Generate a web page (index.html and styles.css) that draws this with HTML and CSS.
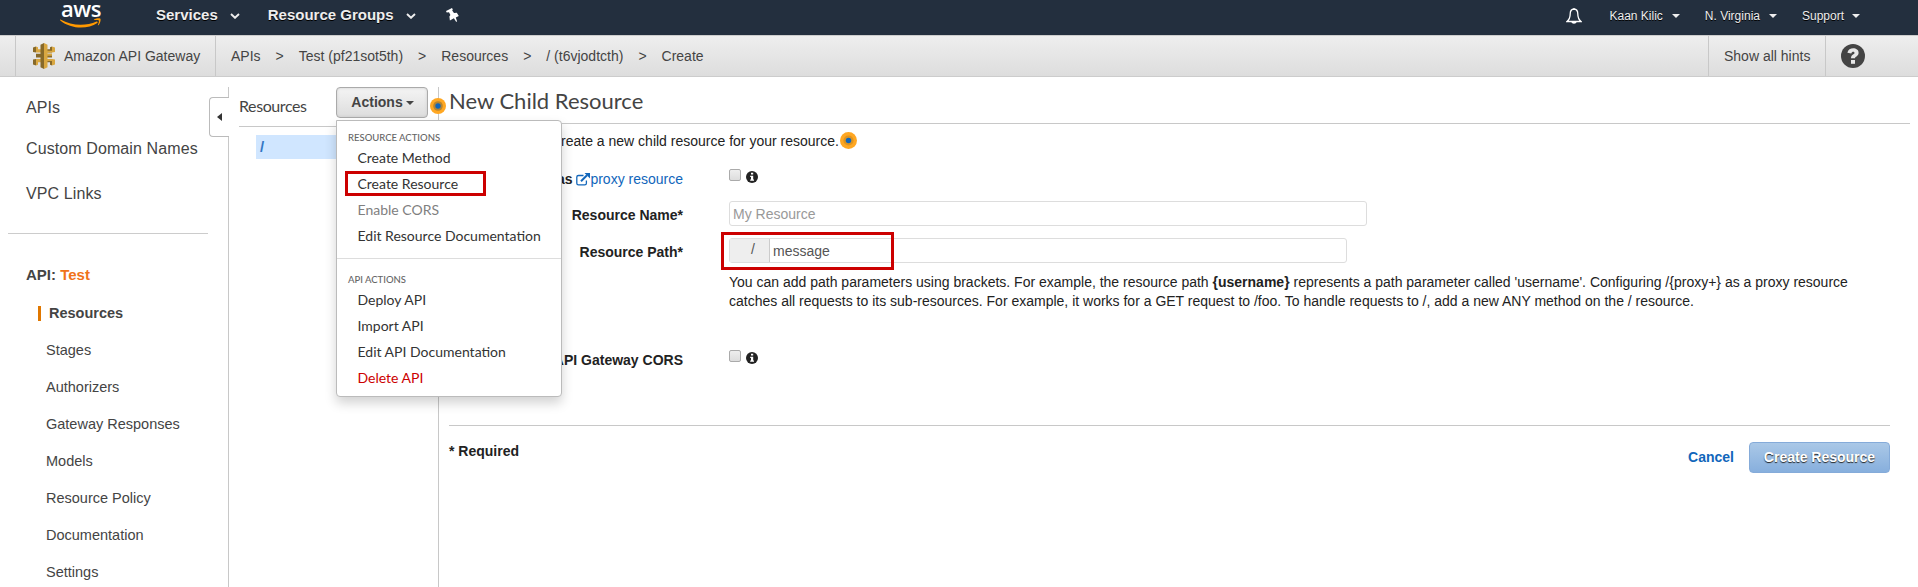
FILE: index.html
```html
<!DOCTYPE html>
<html lang="en">
<head>
<meta charset="utf-8">
<title>Amazon API Gateway</title>
<link rel="stylesheet" href="styles.css">
</head>
<body>
<header class="topnav">
  <div class="logo"><span class="logo-text">aws</span>
    <svg class="smile" width="42" height="11" viewBox="0 0 42 11"><path d="M.4 1.600C12 8.200 26 8.300 36.600 3.600c.9-.3 1.500.6.7 1.300C27.500 11.500 11 11.200.3 2.400c-.5-.5-.3-1 .1-.8z" fill="#f90"/><path d="M34 1.500c2-1.300 5.800-1.500 6.400-.8.6.9-.2 5-2.100 6.600-.4.2-.6 0-.4-.4.500-1.200 1.400-3.700.9-4.400-.6-.7-3-.4-4.500-.4-.5 0-.6-.3-.3-.6z" fill="#f90"/></svg>
  </div>
  <nav class="topmenu">
    <span class="svc">Services</span><svg class="chev" width="10" height="6" viewBox="0 0 10 6"><path d="M1 1l4 3.800L9 1" fill="none" stroke="#eee" stroke-width="1.900"/></svg>
    <span class="grp">Resource Groups</span><svg class="chev" width="10" height="6" viewBox="0 0 10 6"><path d="M1 1l4 3.800L9 1" fill="none" stroke="#eee" stroke-width="1.900"/></svg>
    <svg class="pin" width="13" height="14" viewBox="0 0 13 14"><path d="M0 3L6 0l.8 1.500-.6 1 1.800 2.600 2.800-.3 2 3.200-3 1.500 1.300 4-1 .2-2.200-3.400-4 2.200-.5-4 1-1.500-1.400-2.700-2.300.3z" fill="#fff"/></svg>
  </nav>
  <div class="account">
    <svg class="bell" width="16" height="18" viewBox="0 0 16 18"><path d="M8 1v1M8 2C5.200 2.200 4.200 4.500 4.200 7c0 4-1.100 5.700-3.200 7.500h14c-2.100-1.800-3.200-3.500-3.200-7.500 0-2.500-1-4.800-3.800-5z" fill="none" stroke="#fff" stroke-width="1.300"/><path d="M5.300 14.500h5.400c-.3 3-5.100 3-5.400 0z" fill="#fff"/></svg>
    <span class="acct user">Kaan Kilic</span><i class="tri"></i>
    <span class="acct region">N. Virginia</span><i class="tri"></i>
    <span class="acct support">Support</span><i class="tri"></i>
  </div>
</header>
<div class="crumbbar">
  <div class="product">
    <svg width="22" height="26" viewBox="0 0 22 26"><path d="M0 4.500l3-1V9.500l-3-.6zM0 16.500l3-.6v6.600l-3-1zM3 10.800h5v3.600H3z" fill="#876929"/><path d="M3 3.500l2 .7v2h3v3.300H3zM3 15.900h5v3.300H5v2.600l-2 .7z" fill="#d9a741"/><path d="M19 3.500l-2 .7v2h-3v3.300h5zM19 15.900h-5v3.300h3v2.600l2 .7zM14 10.800h5v3.600h-5z" fill="#876929"/><path d="M19 3.500l3 1v4.400l-3 .6h-5V7.700h5zM19 15.900l3 .6v5l-3 1zM14 10.800h5v2h-5zM14 15.900h5v2h-5z" fill="#d9a741"/><path d="M7.500 1.700L11 0v26l-3.500-1.700z" fill="#876929"/><path d="M11 0l3.500 1.700v22.600L11 26z" fill="#d9a741"/></svg>
    <span>Amazon API Gateway</span>
  </div>
  <div class="crumbs"><span>APIs</span><b>&gt;</b><span>Test (pf21sot5th)</span><b>&gt;</b><span>Resources</span><b>&gt;</b><span>/ (t6vjodtcth)</span><b>&gt;</b><span>Create</span></div>
  <div class="hints">Show all hints</div>
  <div class="help"><svg width="24" height="24" viewBox="0 0 24 24"><circle cx="12" cy="12" r="12" fill="#444"/><path d="M6.400 8.800C7.300 2.700 17.800 3 17.600 9c-.1 3.200-3.600 3.400-3.600 5.300h-4c0-4.100 3.500-3.800 3.500-5.400 0-1.600-2.800-1.600-3.200.7z" fill="#e6e6e6"/><path d="M10 16h4v3.800h-4z" fill="#e6e6e6"/></svg></div>
</div>
<div class="page">
  <aside class="sidebar">
    <ul class="primary"><li>APIs</li><li>Custom Domain Names</li><li>VPC Links</li></ul>
    <div class="rule"></div>
    <div class="apiname">API: <span>Test</span></div>
    <ul class="secondary"><li class="current">Resources</li><li>Stages</li><li>Authorizers</li><li>Gateway Responses</li><li>Models</li><li>Resource Policy</li><li>Documentation</li><li>Settings</li></ul>
    <div class="collapse"><i></i></div>
  </aside>
  <section class="tree">
    <div class="treehead"><span>Resources</span>
      <div class="actions">
        <button class="actbtn">Actions<i></i></button>
        <div class="menu">
          <h4>RESOURCE ACTIONS</h4>
          <a>Create Method</a><a class="marked">Create Resource</a><a class="off">Enable CORS</a><a>Edit Resource Documentation</a>
          <hr>
          <h4>API ACTIONS</h4>
          <a>Deploy API</a><a>Import API</a><a>Edit API Documentation</a><a class="danger">Delete API</a>
        </div>
      </div>
    </div>
    <div class="node">/</div>
    <svg class="hint edge" width="16" height="16" viewBox="0 0 16 16"><circle cx="8" cy="8" r="8" fill="#ffa722"/><circle cx="8" cy="8" r="4.800" fill="#b68432"/><circle cx="8" cy="8" r="2.700" fill="#1166bb"/></svg>
  </section>
  <main class="main">
    <h1>New Child Resource</h1>
    <p class="desc">Use this page to create a new child resource for your resource.<svg class="hint" width="17" height="17" viewBox="0 0 16 16"><circle cx="8" cy="8" r="8" fill="#ffa722"/><circle cx="8" cy="8" r="4.800" fill="#df941f"/><circle cx="8" cy="8" r="2.600" fill="#1166bb"/></svg></p>
    <div class="row proxy"><label>Configure as <svg class="ext" width="14" height="13" viewBox="0 0 14 13"><path d="M7.500 2.500h-5C1.500 2.500.8 3 .8 4v6.200c0 1 .7 1.700 1.700 1.700h6.200c1 0 1.700-.7 1.700-1.700V7.500" fill="none" stroke="#1166bb" stroke-width="1.300"/><path d="M5 8.200l6-6" stroke="#1166bb" stroke-width="2"/><path d="M8.500 0H14v5.500z" fill="#1166bb"/></svg><span class="link">proxy resource</span></label>
      <div class="check"><i class="box"></i><svg width="12" height="12" viewBox="0 0 12 12"><circle cx="6" cy="6" r="6" fill="#222"/><path d="M5 1.700h2.200v1.800H5zM4.200 4.700h3v3.700H8v1.300H4.200V8.400H5V6h-.8z" fill="#fff"/></svg></div></div>
    <div class="row name"><label>Resource Name*</label><div class="field wide placeholder">My Resource</div></div>
    <div class="row path"><label>Resource Path*</label><div class="field"><span class="addon">/</span><span class="value">message</span></div></div>
    <p class="note">You can add path parameters using brackets. For example, the resource path <b>{username}</b> represents a path parameter called 'username'. Configuring /{proxy+} as a proxy resource<br>catches all requests to its sub-resources. For example, it works for a GET request to /foo. To handle requests to /, add a new ANY method on the / resource.</p>
    <div class="row cors"><label>Enable API Gateway CORS</label>
      <div class="check"><i class="box"></i><svg width="12" height="12" viewBox="0 0 12 12"><circle cx="6" cy="6" r="6" fill="#222"/><path d="M5 1.700h2.200v1.800H5zM4.200 4.700h3v3.700H8v1.300H4.200V8.400H5V6h-.8z" fill="#fff"/></svg></div></div>
    <footer class="foot"><span class="req">* Required</span><span class="cancel">Cancel</span><button class="submit">Create Resource</button></footer>
  </main>
</div>
</body>
</html>
```

FILE: styles.css
```css
*, *::before, *::after { box-sizing: border-box; }
body { margin: 0; height: 587px; overflow: hidden; background: #fff; font: 14px/20px "Liberation Sans", Arial, sans-serif; color: #444; }
ul, h1, h4, p { margin: 0; padding: 0; list-style: none; }
svg { display: block; flex: none; }

.topnav { height: 35px; background: #232f3e; display: flex; color: #eee; text-shadow: 0 1px 0 #000; }
.logo { width: 42px; margin-left: 60px; display: flex; flex-direction: column; align-items: center; }
.logo-text { font: 600 22px/16px "Open Sans", sans-serif; letter-spacing: -.4px; height: 18px; color: #fff; text-shadow: none; }
.topmenu { display: flex; align-items: center; height: 30px; margin-left: 54px; font-size: 15px; font-weight: bold; }
.chev { margin: 2px 0 0 12px; }
.grp { margin-left: 28px; }
.pin { margin-left: 30px; }
.account { display: flex; align-items: center; height: 32px; margin-left: auto; padding-right: 58px; font-size: 12px; }
.bell { margin-right: 27px; }
.tri { border: 4px solid transparent; border-top-color: #eee; border-bottom: 0; margin-left: 9px; }
.region { margin-left: 25px; }
.support { margin-left: 25px; }
.support + .tri { margin-left: 8px; }

.crumbbar { height: 42px; display: flex; align-items: center; border-top: 1px solid #ccc; border-bottom: 1px solid #ccc; background: linear-gradient(#eee, #ddd); }
.product { width: 201px; height: 40px; margin-left: 15px; border: solid #c8c8c8; border-width: 0 1px; display: flex; align-items: center; gap: 9px; padding-left: 17px; white-space: nowrap; }
.crumbs { display: flex; margin-left: 15px; }
.crumbs b { font-weight: normal; margin: 0 15px; }
.hints { margin-left: auto; width: 117px; height: 40px; line-height: 40px; padding-left: 15px; border-left: 1px solid #c8c8c8; }
.help { width: 93px; height: 40px; border-left: 1px solid #c8c8c8; padding: 8px 0 0 15px; }

.page { display: flex; height: 510px; padding-top: 10px; }
.sidebar { position: relative; width: 229px; border-right: 1px solid #c8c8c8; padding-left: 26px; }
.primary { font-size: 16px; letter-spacing: .1px; }
.primary li { height: 45px; line-height: 20px; padding-top: 11px; }
.primary li:first-child { height: 41px; }
.rule { height: 1px; width: 200px; background: #ccc; margin: 15px 0 0 -18px; }
.apiname { font-size: 15px; font-weight: bold; margin-top: 31px; }
.apiname span { color: #f0731a; }
.secondary { margin: 10px 0 0 12px; font-size: 14.500px; }
.secondary li { height: 37px; line-height: 37px; padding-left: 8px; }
.secondary .current { display: flex; align-items: center; font-weight: bold; padding-left: 0; }
.current::before { content: ""; width: 3px; height: 15px; background: #e07700; margin-right: 8px; }
.collapse { position: absolute; left: 209px; top: 10px; width: 20px; height: 40px; background: #fff; border: 1px solid #bbb; border-right: 0; border-radius: 4px 0 0 4px; padding: 15px 0 0 7px; }
.collapse i { display: block; width: 0; border: 4px solid transparent; border-right: 5px solid #333; border-left: 0; }

.tree { position: relative; width: 210px; border-right: 1px solid #c8c8c8; padding-left: 10px; }
.treehead { height: 40px; border-bottom: 1px solid #c8c8c8; display: flex; font: 16px/38px Lato, sans-serif; }
.treehead > span { width: 97px; letter-spacing: -.4px; }
.actions { position: relative; }
.actbtn { display: flex; align-items: center; justify-content: center; gap: 3px; width: 92px; height: 31px; padding: 0 0 1px 1px; border: 1px solid #aaa; border-radius: 4px; background: linear-gradient(#f4f4f4, #ddd); box-shadow: inset 0 0 3px #ccc; font: bold 14px "Liberation Sans", sans-serif; color: #444; }
.actbtn i { border: 4px solid transparent; border-top-color: #444; border-bottom: 0; margin-top: 2px; }
.menu { position: absolute; z-index: 3; left: 0; top: 33px; width: 226px; height: 277px; background: #fff; border: 1px solid #bbb; border-radius: 0 4px 4px 4px; box-shadow: 0 6px 12px rgba(0,0,0,.18); font-size: 14px; color: #333; padding-top: 8px; }
.menu h4 { font-size: 9.500px; line-height: 18px; height: 16px; font-weight: 500; color: #666; padding-left: 11px; }
.menu a { position: relative; display: block; height: 26px; line-height: 26px; padding-left: 20.500px; white-space: nowrap; }
.menu hr { border: 0; border-top: 1px solid #ddd; margin: 9px 0 12px; }
.menu .off { color: #808080; }
.menu .danger { color: #c00; }
.marked::after { content: ""; position: absolute; left: 8px; top: 0; width: 141px; height: 25px; border: 3px solid #c00; }
.node { height: 24px; margin: 8px 0 0 17px; padding-left: 4px; background: #d0e6ff; color: #3377c4; font-size: 15px; line-height: 24px; font-weight: bold; }
.hint.edge { position: absolute; left: 201px; top: 11px; }

.main { width: 1461px; margin-left: 10px; color: #222; }
h1 { height: 37px; border-bottom: 1px solid #c8c8c8; font: 22px/28px Lato, sans-serif; color: #444; }
.desc { height: 33px; display: flex; align-items: center; gap: 1px; }
.row { display: flex; }
.row label { width: 234px; margin-right: 46px; display: flex; justify-content: flex-end; align-items: center; white-space: pre; font-weight: bold; line-height: 25px; height: 25px; }
.link { color: #1166bb; font-weight: normal; }
.check { display: flex; gap: 5px; }
.box { width: 12px; height: 12px; border: 1px solid #aaa; border-radius: 2px; background: linear-gradient(#eee, #ddd); }
.proxy { margin-top: 10px; height: 34px; }
.proxy .check { margin-top: 2px; }
.check svg { margin-top: 2px; }
.field { position: relative; display: flex; width: 618px; height: 25px; line-height: 23px; border: 1px solid #ddd; border-radius: 3px; color: #555; }
.wide { width: 638px; }
.placeholder { color: #999; padding-left: 3px; line-height: 24px; }
.path { margin-top: 12px; }
.row.name label, .row.path label { padding-top: 4px; }
.path .field::after { content: ""; position: absolute; left: -9px; top: -7px; width: 173px; height: 38px; border: 3px solid #c00; }
.addon { width: 40px; background: #eee; border-right: 1px solid #ccc; padding-left: 21px; line-height: 21px; }
.value { padding-left: 3px; line-height: 24px; }
.note { margin: 10px 0 0 280px; line-height: 19px; white-space: nowrap; }
.cors { margin-top: 38px; height: 76px; }
.cors .check { margin-top: 1px; }
.cors label { margin-top: -1px; }
.foot { width: 1441px; border-top: 1px solid #c8c8c8; display: flex; align-items: flex-start; font-weight: bold; padding-top: 16px; }
.req { margin-top: -1px; }
.cancel { margin: 5px 15px 0 auto; color: #1166bb; }
.submit { width: 141px; height: 31px; border: 1px solid #85abd9; border-radius: 4px; background: linear-gradient(#aac8e7, #87afdd); color: #fff; font: bold 14px "Liberation Sans", sans-serif; text-shadow: 0 1px 1px #222; padding: 0 0 1px; }
```
